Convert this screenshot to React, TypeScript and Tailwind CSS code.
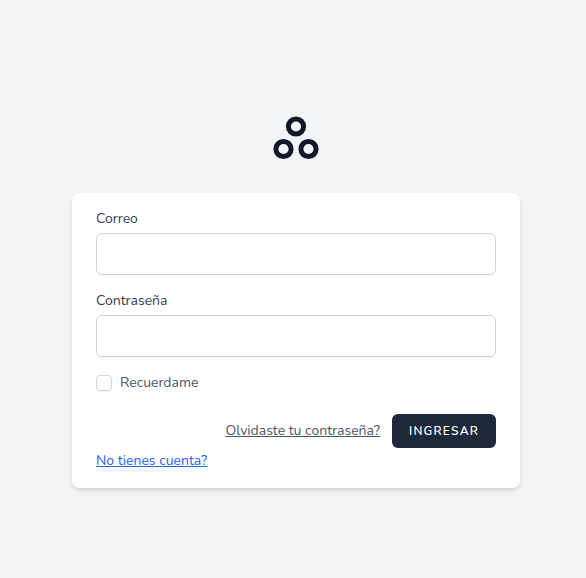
import React from "react";

function Logo() {
  return (
    <svg viewBox="0 0 79 79" className="h-[79px] w-[79px]" fill="none" stroke="#111827" strokeWidth="5" aria-hidden="true">
      <circle cx="39" cy="36.5" r="7.6" />
      <circle cx="26.5" cy="59" r="7.6" />
      <circle cx="51.5" cy="59" r="7.6" />
    </svg>
  );
}

function Field({ id, label, type }: { id: string; label: string; type: string }) {
  return (
    <div>
      <label htmlFor={id} className="block text-sm text-[#374151]">
        {label}
      </label>
      <input
        id={id}
        type={type}
        className="mt-1 block h-[42px] w-full rounded-md border border-[#d1d5db] bg-white px-3 text-base shadow-xs outline-none focus:border-indigo-300"
      />
    </div>
  );
}

export default function App() {
  return (
    <div className="flex min-h-screen flex-col items-center justify-center bg-[#f3f4f6] pl-1.5 font-['Nunito','Lato',sans-serif] text-gray-900">
      <a href="#inicio" aria-label="Inicio" className="block">
        <Logo />
      </a>
      <form
        onSubmit={(e) => e.preventDefault()}
        className="mt-6 flex w-full max-w-md flex-col gap-4 rounded-lg bg-white px-6 py-4 shadow-md"
      >
        <Field id="correo" label="Correo" type="email" />
        <Field id="contrasena" label="Contraseña" type="password" />
        <label htmlFor="recuerdame" className="flex h-[25px] items-start gap-2 text-sm text-[#4b5563]">
          <input
            id="recuerdame"
            type="checkbox"
            className="mt-0.5 h-4 w-4 appearance-none rounded-sm border border-[#d1d5db] bg-white shadow-xs checked:bg-indigo-600"
          />
          Recuerdame
        </label>
        <div>
          <div className="flex items-center justify-end gap-3">
            <a href="#recuperar" className="text-sm text-[#4b5563] underline">
              Olvidaste tu contraseña?
            </a>
            <button
              type="submit"
              className="rounded-md border border-transparent bg-[#1f2937] px-4 py-2 text-xs font-semibold tracking-widest text-white uppercase"
            >
              Ingresar
            </button>
          </div>
          <p className="text-base">
            <a href="#registro" className="text-sm text-[#2563eb] underline">
              No tienes cuenta?
            </a>
          </p>
        </div>
      </form>
    </div>
  );
}
